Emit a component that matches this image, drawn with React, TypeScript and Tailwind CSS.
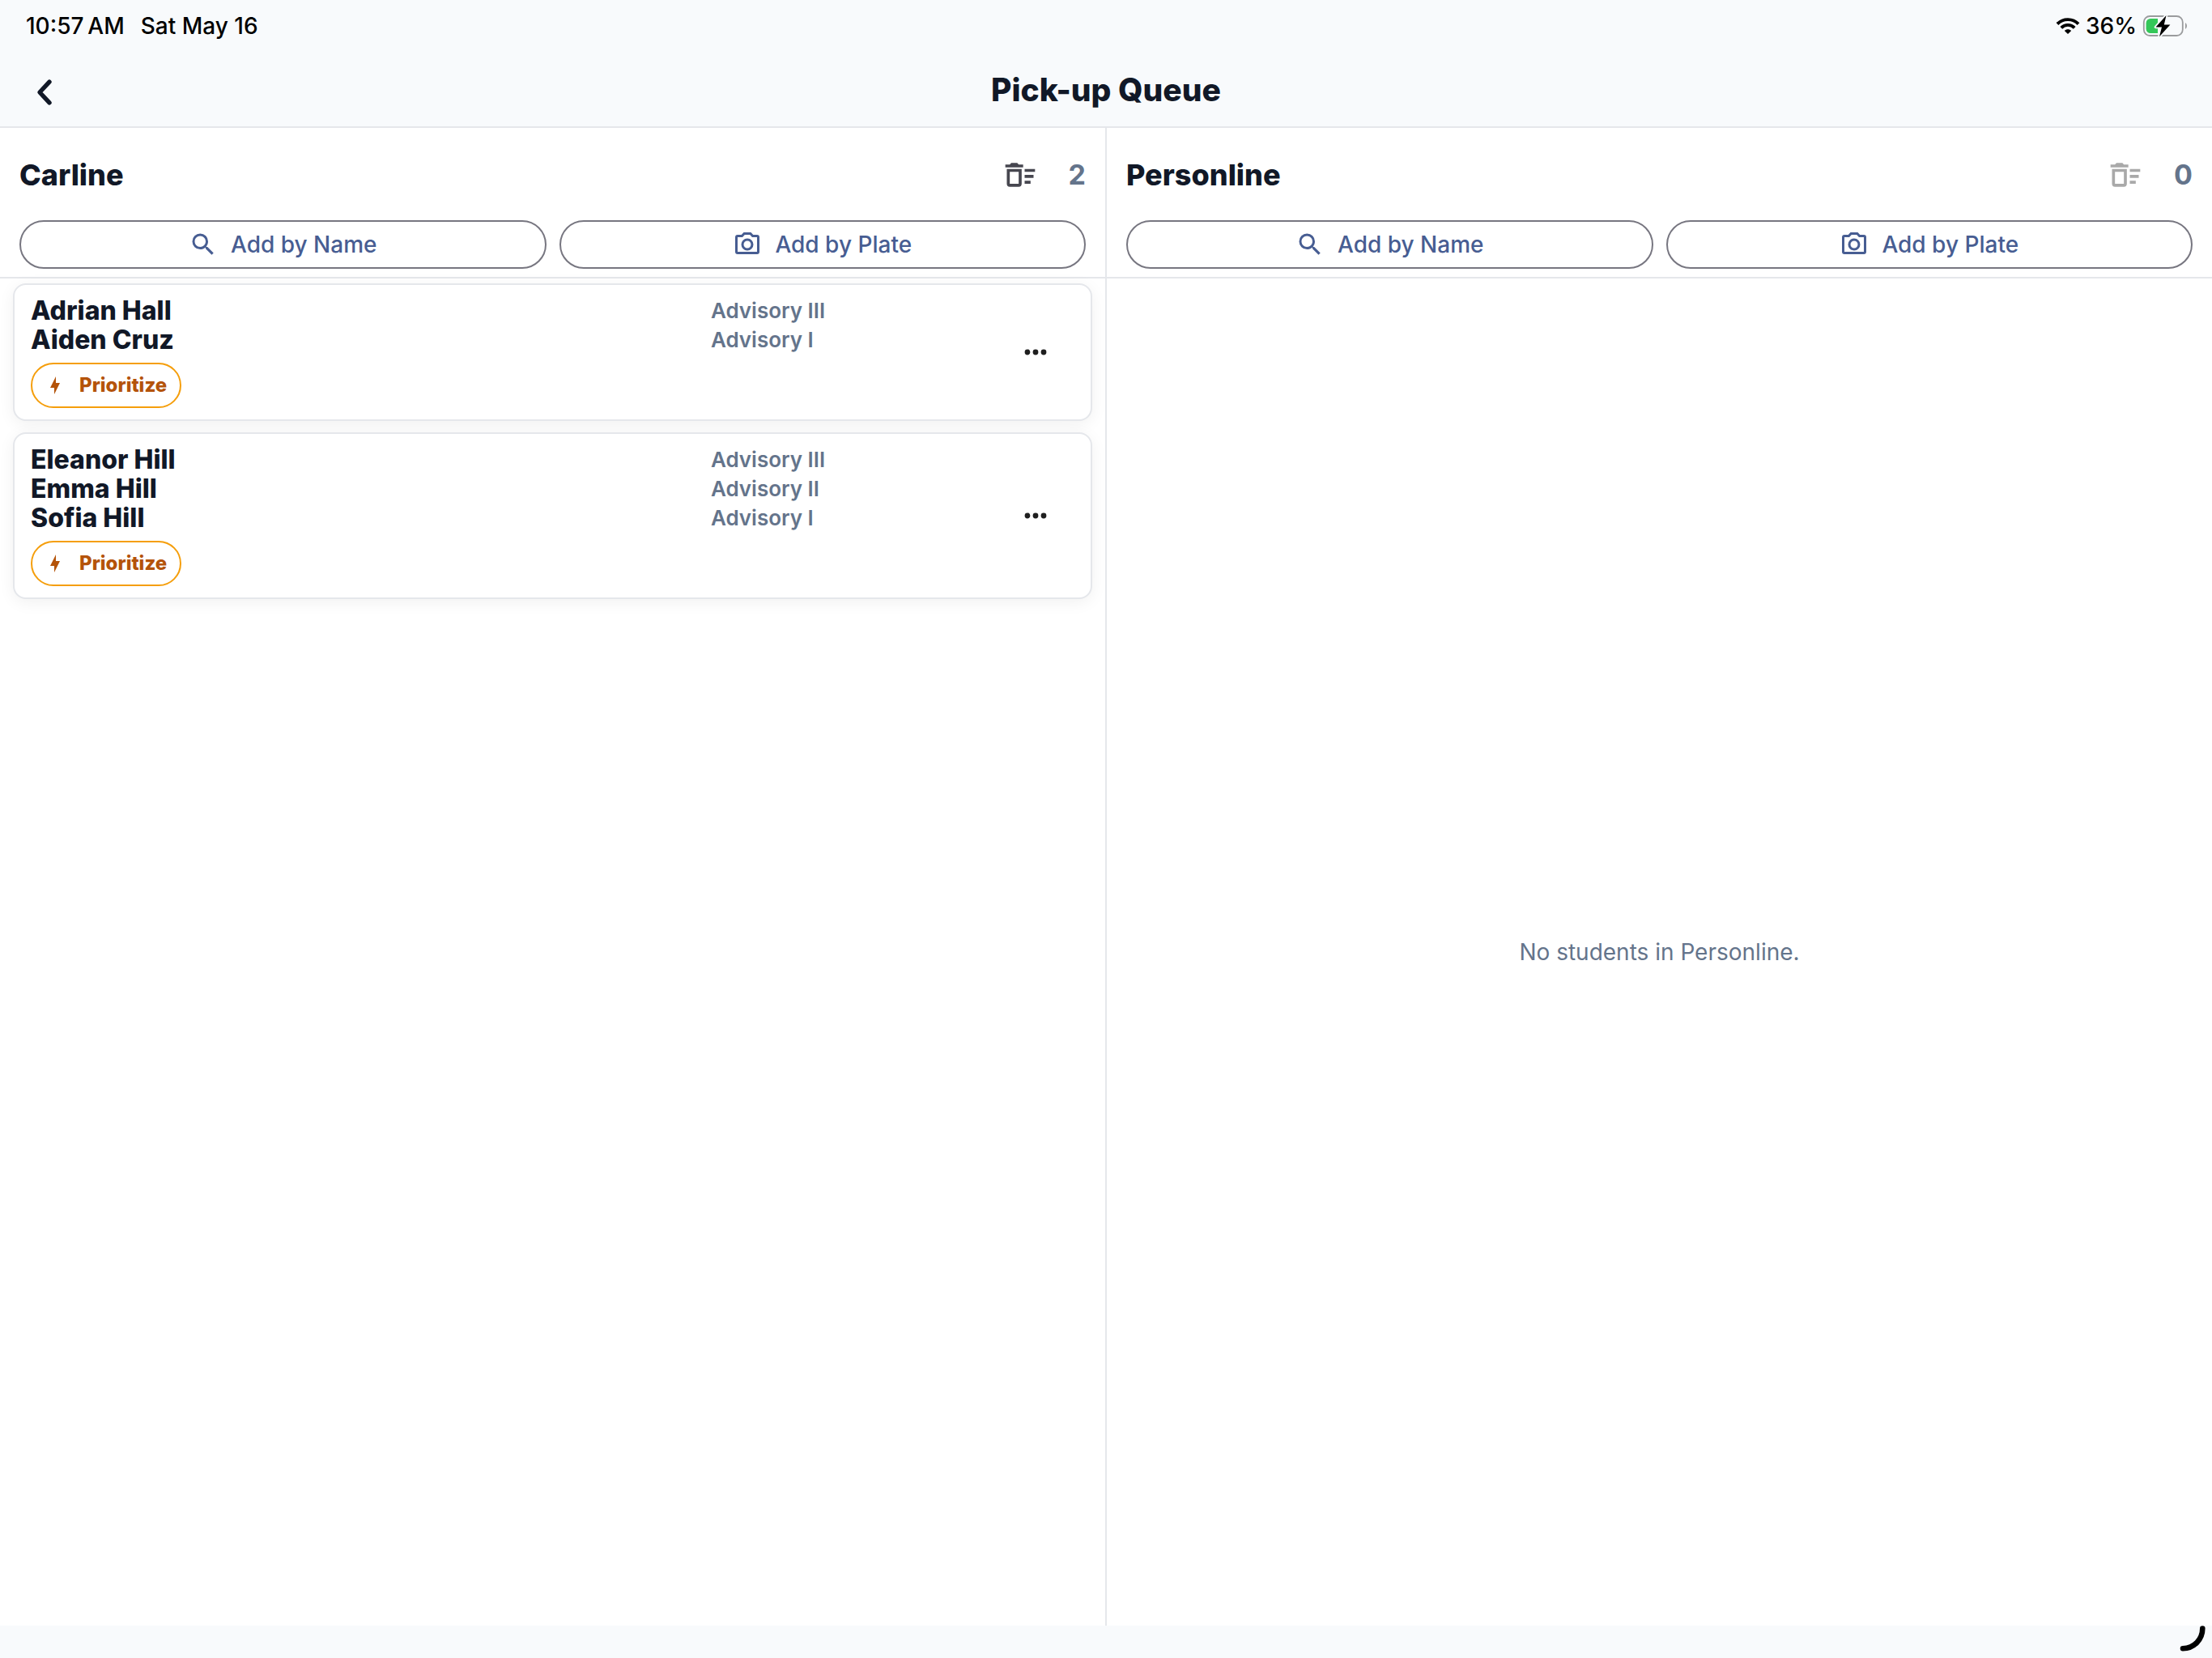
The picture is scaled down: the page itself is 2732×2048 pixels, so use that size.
import { useState } from "react";
import clsx from "clsx";

type Student = { name: string; advisory: string };
type Pickup = { id: number; students: Student[] };

const CARLINE: Pickup[] = [
  {
    id: 1,
    students: [
      { name: "Adrian Hall", advisory: "Advisory III" },
      { name: "Aiden Cruz", advisory: "Advisory I" },
    ],
  },
  {
    id: 2,
    students: [
      { name: "Eleanor Hill", advisory: "Advisory III" },
      { name: "Emma Hill", advisory: "Advisory II" },
      { name: "Sofia Hill", advisory: "Advisory I" },
    ],
  },
];

const ICONS = {
  magnify:
    "M9.5,3A6.5,6.5 0 0,1 16,9.5C16,11.11 15.41,12.59 14.44,13.73L14.71,14H15.5L20.5,19L19,20.5L14,15.5V14.71L13.73,14.44C12.59,15.41 11.11,16 9.5,16A6.5,6.5 0 0,1 3,9.5A6.5,6.5 0 0,1 9.5,3M9.5,5C7,5 5,7 5,9.5C5,12 7,14 9.5,14C12,14 14,12 14,9.5C14,7 12,5 9.5,5Z",
  camera:
    "M20,4H16.83L15,2H9L7.17,4H4A2,2 0 0,0 2,6V18A2,2 0 0,0 4,20H20A2,2 0 0,0 22,18V6A2,2 0 0,0 20,4M20,18H4V6H8.05L9.88,4H14.12L15.95,6H20V18M12,7A5,5 0 0,0 7,12A5,5 0 0,0 12,17A5,5 0 0,0 17,12A5,5 0 0,0 12,7M12,15A3,3 0 0,1 9,12A3,3 0 0,1 12,9A3,3 0 0,1 15,12A3,3 0 0,1 12,15Z",
  sweep:
    "M15,16H19V18H15V16M15,8H22V10H15V8M15,12H21V14H15V12M11,10V18H5V10H11M13,8H3V18A2,2 0 0,0 5,20H11A2,2 0 0,0 13,18V8M14,5H11L10,4H6L5,5H2V7H14V5Z",
  bolt: "M11 15H6L13 1V9H18L11 23V15Z",
};

function Icon({ name, className }: { name: keyof typeof ICONS; className?: string }) {
  return (
    <svg viewBox="0 0 24 24" fill="currentColor" className={clsx("shrink-0", className)} aria-hidden="true">
      <path d={ICONS[name]} />
    </svg>
  );
}

function StatusBar() {
  return (
    <div className="flex h-16 items-center justify-between pl-8 pr-[30px] text-[28px] leading-9 font-medium text-black">
      <div className="flex gap-5">
        <span>10:57{"\u2009"}AM</span>
        <span>Sat May 16</span>
      </div>
      <div className="flex items-center gap-[7px]">
        <svg viewBox="0 0 30 20" className="h-5 w-[30px]" fill="none" stroke="black" aria-hidden="true">
          <path d="M2 7.6C9 0.2 21 0.2 28 7.6" strokeWidth="3.8" />
          <path d="M6.8 12.4C11.4 7.7 18.6 7.7 23.2 12.4" strokeWidth="3.8" />
          <path d="M15 20L10.8 15.9C13.2 13.8 16.8 13.8 19.2 15.9Z" fill="black" stroke="none" />
        </svg>
        <span>36%</span>
        <svg viewBox="0 0 56 28" className="h-7 w-14" aria-hidden="true">
          <rect x="1.8" y="2" width="48" height="24" rx="7.5" fill="none" stroke="#9a9b9d" strokeWidth="1.8" />
          <path d="M53 10.2C55.6 11.4 55.6 16.6 53 17.8Z" fill="#9a9b9d" />
          <path d="M10 5H19V23H10A5.4 5.4 0 0 1 4.6 17.6V10.4A5.4 5.4 0 0 1 10 5Z" fill="#34c759" />
          <path
            d="M29.5 1L16.5 15.4H24L21 27.2L34.4 12.6H26.8Z"
            fill="black"
            stroke="#f8fafc"
            strokeWidth="3.6"
            strokeLinejoin="round"
            paintOrder="stroke"
          />
        </svg>
      </div>
    </div>
  );
}

function Header() {
  return (
    <header className="border-b-2 border-[#e5e7eb] bg-[#f8fafc]">
      <StatusBar />
      <div className="grid h-[92px] grid-cols-[1fr_auto_1fr] items-center px-8 pt-0.5">
        <button type="button" aria-label="Back" className="w-12">
          <svg viewBox="0 0 48 48" className="size-12" fill="none" stroke="#111827" aria-hidden="true">
            <path d="M29 14.2L17 27L29 39.8" strokeWidth="5.4" strokeLinecap="round" strokeLinejoin="round" />
          </svg>
        </button>
        <h1 className="text-[39px] leading-12 font-extrabold">Pick-up Queue</h1>
      </div>
    </header>
  );
}

function AddButton({ icon, label }: { icon: keyof typeof ICONS; label: string }) {
  return (
    <button
      type="button"
      className="flex h-[60px] flex-1 items-center justify-center gap-4 rounded-full border-2 border-[#777680] text-[28px] leading-9 font-medium text-[#475d92]"
    >
      <Icon name={icon} className="size-9" />
      {label}
    </button>
  );
}

function PickupCard({ pickup }: { pickup: Pickup }) {
  const [prioritized, setPrioritized] = useState(false);

  return (
    <li className="flex items-center rounded-2xl border-2 border-[#e5e7eb] bg-white px-5 py-3.5 shadow-[0_4px_20px_rgba(0,0,0,0.06)]">
      <div className="flex-1">
        {pickup.students.map((student) => (
          <div key={student.name} className="grid grid-cols-[7fr_3fr] items-center gap-4 leading-9">
            <span className="text-[32px] font-extrabold">{student.name}</span>
            <span className="text-[26px] font-semibold text-[#64748b]">{student.advisory}</span>
          </div>
        ))}
        <button
          type="button"
          aria-pressed={prioritized}
          onClick={() => setPrioritized(!prioritized)}
          className="mt-2.5 flex h-14 items-center gap-[18px] rounded-full border-2 border-[#f59e0b] px-4 text-[24px] leading-7 font-extrabold text-[#b45309]"
        >
          <Icon name="bolt" className="size-6" />
          Prioritize
        </button>
      </div>
      <button type="button" aria-label="More options" className="flex h-14 w-24 items-center justify-center">
        <svg viewBox="0 0 28 8" className="h-2 w-7" fill="#1f1f1f" aria-hidden="true">
          <circle cx="4" cy="4" r="3.4" />
          <circle cx="14" cy="4" r="3.4" />
          <circle cx="24" cy="4" r="3.4" />
        </svg>
      </button>
    </li>
  );
}

function QueueColumn({ title, pickups }: { title: string; pickups: Pickup[] }) {
  const empty = pickups.length === 0;

  return (
    <section className="flex flex-1 flex-col">
      <div className="border-b-2 border-[#e5e7eb] px-6 pt-[22px] pb-2.5">
        <div className="mb-5 flex h-[72px] items-center">
          <h2 className="flex-1 text-[36px] leading-10 font-extrabold">{title}</h2>
          <button
            type="button"
            aria-label={`Clear ${title}`}
            disabled={empty}
            className="mr-[38px] text-[#46464f] disabled:text-[#a9a9a9]"
          >
            <Icon name="sweep" className="size-11" />
          </button>
          <span className="text-[34px] leading-10 font-bold text-[#64748b]">{pickups.length}</span>
        </div>
        <div className="flex gap-4">
          <AddButton icon="magnify" label="Add by Name" />
          <AddButton icon="camera" label="Add by Plate" />
        </div>
      </div>
      {empty ? (
        <div className="flex flex-1 items-center justify-center text-[28px] leading-9 text-[#64748b]">
          No students in {title}.
        </div>
      ) : (
        <ul className="flex flex-col gap-3.5 px-4 pt-1.5">
          {pickups.map((pickup) => (
            <PickupCard key={pickup.id} pickup={pickup} />
          ))}
        </ul>
      )}
    </section>
  );
}

export default function App() {
  return (
    <div className="flex min-h-screen flex-col bg-white font-['Inter',sans-serif] text-[#111827]">
      <Header />
      <main className="flex flex-1">
        <QueueColumn title="Carline" pickups={CARLINE} />
        <div className="w-0.5 bg-[#e5e7eb]" />
        <QueueColumn title="Personline" pickups={[]} />
      </main>
      <footer className="flex h-10 justify-end bg-[#f8fafc] pr-2">
        <svg viewBox="0 0 32 32" className="size-8" fill="none" stroke="black" aria-hidden="true">
          <path d="M28.3 3.6C28.3 17 18 28 4 28.3" strokeWidth="6.6" strokeLinecap="round" />
        </svg>
      </footer>
    </div>
  );
}
